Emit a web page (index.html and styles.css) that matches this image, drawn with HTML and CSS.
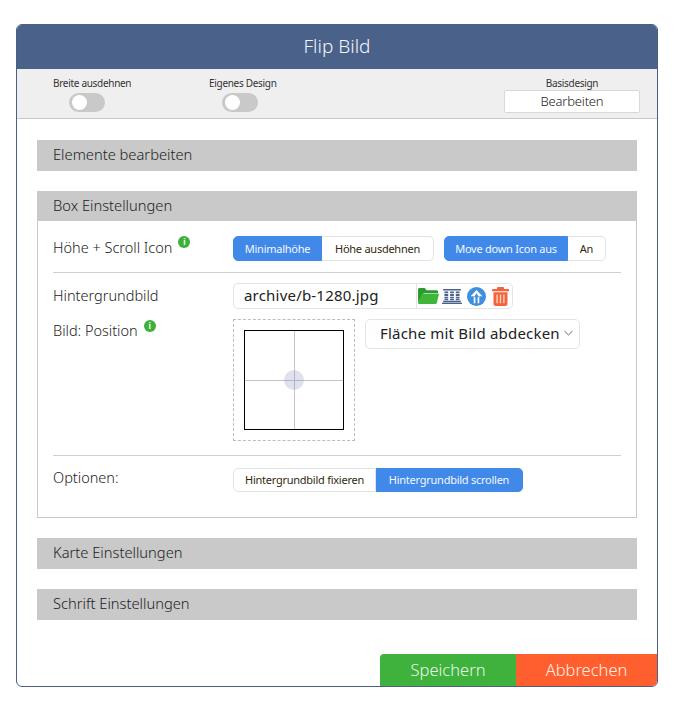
FILE: index.html
```html
<!DOCTYPE html>
<html lang="de">
<head>
<meta charset="utf-8">
<title>Flip Bild</title>
<link rel="stylesheet" href="styles.css">
</head>
<body>
<div class="modal">
  <header class="modal-head">Flip Bild</header>
  <div class="subbar">
    <div class="sub-col sub-col-a">
      <span class="sub-label">Breite ausdehnen</span>
      <span class="toggle toggle-a"><span class="knob"></span></span>
    </div>
    <div class="sub-col sub-col-b">
      <span class="sub-label">Eigenes Design</span>
      <span class="toggle toggle-b"><span class="knob"></span></span>
    </div>
    <div class="sub-col sub-col-c">
      <span class="sub-label sub-label-c">Basisdesign</span>
      <button class="edit-btn">Bearbeiten</button>
    </div>
  </div>
  <main class="modal-body">
    <h2 class="section-title">Elemente bearbeiten</h2>
    <section class="section">
      <h2 class="section-title">Box Einstellungen</h2>
      <div class="box">
        <div class="row row-first">
          <div class="label">Höhe + Scroll Icon<span class="info">i</span></div>
          <div class="controls">
            <div class="seg">
              <span class="seg-btn on w-min">Minimalhöhe</span>
              <span class="seg-btn w-ext">Höhe ausdehnen</span>
            </div>
            <div class="seg">
              <span class="seg-btn on w-move">Move down Icon aus</span>
              <span class="seg-btn w-an">An</span>
            </div>
          </div>
        </div>
        <div class="row row-file">
          <div class="label">Hintergrundbild</div>
          <div class="file">
            <span class="file-name">archive/b-1280.jpg</span>
            <span class="file-icons">
              <svg class="ico ico-folder" viewBox="0 0 22 15" preserveAspectRatio="none"><path fill="#2a9c2e" d="M0 14V1.500C0 .7.600 0 1.400 0h5.600l2 2h10.600c.8 0 1.400.6 1.400 1.400V5H6.500c-.7 0-1.200.4-1.500 1z"/><path fill="#3fb53a" d="M0 15l3.400-8.700c.3-.5.700-.8 1.300-.8H22l-2.300 8.500c-.3.600-.7 1-1.400 1z"/></svg>
              <svg class="ico ico-lib" viewBox="0 0 18 18" preserveAspectRatio="none"><path fill="#4a6189" d="M1 1h16v1.800H1zM1 14.400h16V16H1zM0 16.600h18V18H0z"/><path fill="#4a6189" d="M2.200 3.800h3.400v2.200H2.200zM2.200 6.800h3.400V9H2.200zM2.200 9.800h3.400v2H2.200zM2.200 12.400h3.400v1.400H2.200zM7.300 3.800h3.400v2.200H7.300zM7.300 6.800h3.400V9H7.300zM7.300 9.800h3.400v2H7.300zM7.300 12.400h3.400v1.400H7.300zM12.400 3.800h3.400v2.200h-3.400zM12.400 6.800h3.400V9h-3.400zM12.400 9.800h3.400v2h-3.400zM12.400 12.400h3.400v1.400h-3.400z"/></svg>
              <svg class="ico ico-up" viewBox="0 0 20 20"><circle cx="10" cy="10" r="10" fill="#3f8fdf"/><path fill="#fff" d="M10 3.200L16.200 9.800h-3.300V17h-1.700v-6.300h1.500L10 6.700 7.300 10.700h1.500V17H7.100V9.800H3.800z"/></svg>
              <svg class="ico ico-trash" viewBox="0 0 17 20" preserveAspectRatio="none"><path fill="#f4633a" d="M6 0h5c.6 0 1 .4 1 1v1h4c.6 0 1 .4 1 1v1.500H0V3c0-.6.4-1 1-1h4V1c0-.6.4-1 1-1z"/><path fill="#f4633a" d="M1.500 5.500h14V18c0 1.100-.9 2-2 2h-10c-1.100 0-2-.9-2-2z"/><path fill="#fbd3c4" d="M4.400 8h1.400v9H4.400zM7.800 8h1.400v9H7.800zM11.200 8h1.400v9h-1.400z"/></svg>
            </span>
          </div>
        </div>
        <div class="row row-pos">
          <div class="label">Bild: Position<span class="info">i</span></div>
          <div class="pos-controls">
            <div class="picker">
              <div class="picker-frame">
                <span class="cross-v"></span>
                <span class="cross-h"></span>
                <span class="dot"></span>
              </div>
            </div>
            <div class="select">Fläche mit Bild abdecken<svg class="chev" viewBox="0 0 8 5"><path d="M.5.800L4 4.200 7.500.800" fill="none" stroke="#555" stroke-width=".8"/></svg></div>
          </div>
        </div>
        <div class="row row-last">
          <div class="label">Optionen:</div>
          <div class="seg">
            <span class="seg-btn w-fix">Hintergrundbild fixieren</span>
            <span class="seg-btn on w-scroll">Hintergrundbild scrollen</span>
          </div>
        </div>
      </div>
    </section>
    <h2 class="section-title">Karte Einstellungen</h2>
    <h2 class="section-title">Schrift Einstellungen</h2>
  </main>
  <footer class="modal-foot">
    <button class="foot-btn save">Speichern</button>
    <button class="foot-btn cancel">Abbrechen</button>
  </footer>
</div>
</body>
</html>
```
FILE: styles.css
```css
* { box-sizing: border-box; }
html, body { margin: 0; padding: 0; background: #fff; }
body {
  padding: 24px 18px 0 16px;
  font-family: "Noto Sans", "Open Sans", sans-serif;
  font-weight: 300;
  color: #222;
}
.modal {
  width: 642px;
  height: 663px;
  border: 1px solid #4d5f80;
  border-radius: 6px;
  display: flex;
  flex-direction: column;
  background: #fff;
  overflow: hidden;
}
.modal-head {
  height: 45px;
  margin-top: -1px;
  background: #4a6189;
  color: #f2f5f9;
  font-size: 19px;
  line-height: 45px;
  text-align: center;
  flex: none;
}
.subbar {
  height: 50px;
  flex: none;
  background: #efefef;
  border-bottom: 1px solid #c8c8c8;
  display: flex;
  padding: 7px 17px 0 36px;
}
.sub-col { display: flex; flex-direction: column; }
.sub-col-a { width: 156px; }
.sub-col-b { width: 295px; }
.sub-col-c { width: 136px; align-items: center; }
.sub-label { font-size: 10px; line-height: 15px; height: 15px; letter-spacing: -.3px; white-space: nowrap; color: #333; font-weight: 400; }
.toggle {
  width: 36px;
  height: 19px;
  border-radius: 10px;
  background: #c9c9c9;
  margin-top: 2px;
  padding: 2px;
  display: flex;
}
.toggle-a { margin-left: 16px; }
.toggle-b { margin-left: 13px; }
.knob { width: 15px; height: 15px; border-radius: 50%; background: #fff; margin-left: 1px; }
.edit-btn {
  width: 136px;
  height: 23px;
  margin-top: -1px;
  border: 1px solid #d8d8d8;
  border-radius: 2px;
  background: #fff;
  font: 300 13px/21px "Noto Sans", sans-serif;
  letter-spacing: -.2px;
  color: #222;
  padding: 0;
}
.modal-body {
  flex: 1;
  display: flex;
  flex-direction: column;
  gap: 20px;
  padding: 21px 20px 0;
}
.section-title {
  margin: 0;
  height: 31px;
  flex: none;
  background: #c9c9c9;
  font-size: 14.700px;
  font-weight: 300;
  line-height: 29px;
  padding-left: 16px;
  color: #222;
}
.section { display: flex; flex-direction: column; }
.section .section-title { height: 30px; line-height: 28px; }
.box {
  height: 297px;
  border: 1px solid #c9c9c9;
  border-top: 0;
  padding: 0 15px;
}
.row { display: flex; }
.label {
  width: 180px;
  flex: none;
  font-size: 14.500px;
  line-height: 20px;
  color: #222;
  white-space: nowrap;
}
.info {
  display: inline-block;
  width: 12px;
  height: 12px;
  border-radius: 50%;
  background: #3eb03a;
  color: #fff;
  font-size: 8px;
  font-weight: 700;
  line-height: 12px;
  text-align: center;
  margin-left: 6px;
  vertical-align: 7px;
}
.row-first {
  padding: 15px 0 11px;
  border-bottom: 1px solid #d0d0d0;
  align-items: center;
}
.row-first .label { padding-bottom: 4px; }
.row-first .info { vertical-align: 8px; }
.controls { display: flex; gap: 10px; }
.seg { display: flex; height: 25px; }
.row-last .seg { height: 24px; }
.seg-btn {
  border: 1px solid #e2e2e2;
  border-left-width: 0;
  font-size: 11px;
  font-weight: 400;
  letter-spacing: -.25px;
  line-height: 23px;
  text-align: center;
  color: #33290f;
  background: #fff;
  white-space: nowrap;
}
.row-last .seg-btn { line-height: 21px; }
.seg-btn:first-child { border-left-width: 1px; border-radius: 5px 0 0 5px; }
.seg-btn:last-child { border-radius: 0 5px 5px 0; }
.seg-btn.on { background: #4189e8; border-color: #4189e8; color: #f3f7fd; }
.w-min { width: 89px; }
.w-ext { width: 112px; }
.w-move { width: 124px; }
.w-an { width: 38px; }
.w-fix { width: 143px; }
.w-scroll { width: 147px; }
.row-file { margin-top: 10px; height: 26px; align-items: center; }
.row-file .label { padding-bottom: 2px; }
.file {
  display: flex;
  width: 280px;
  height: 26px;
  border: 1px solid #e4e4e4;
  border-radius: 5px;
}
.file-name {
  width: 183px;
  border-right: 1px solid #e4e4e4;
  padding-left: 10px;
  font-size: 15px;
  font-weight: 450;
  letter-spacing: .2px;
  line-height: 23px;
  color: #222;
  white-space: nowrap;
}
.file-icons { display: flex; align-items: center; padding-left: 1px; }
.ico { display: block; flex: none; }
.ico-folder { width: 21px; height: 16px; }
.ico-lib { width: 20px; height: 16px; margin-left: 3px; }
.ico-up { width: 19px; height: 19px; margin-left: 5px; }
.ico-trash { width: 17px; height: 19px; margin-left: 6px; }
.row-pos { margin-top: 10px; padding-bottom: 14px; border-bottom: 1px solid #d0d0d0; }
.row-pos .label { padding-top: 1px; }
.pos-controls { display: flex; gap: 10px; align-items: flex-start; }
.picker {
  width: 122px;
  height: 122px;
  border: 1px dashed #bdbdbd;
  padding: 10px;
}
.picker-frame {
  width: 100px;
  height: 100px;
  border: 1px solid #000;
  position: relative;
}
.cross-v { position: absolute; left: 49px; top: 0; bottom: 0; width: 1px; background: #c3c3cb; }
.cross-h { position: absolute; top: 49px; left: 0; right: 0; height: 1px; background: #c3c3cb; }
.dot {
  position: absolute;
  left: 39px;
  top: 39px;
  width: 20px;
  height: 20px;
  border-radius: 50%;
  background: #7f8ab5;
  opacity: .25;
}
.select {
  width: 215px;
  height: 30px;
  border: 1px solid #e4e4e4;
  border-radius: 5px;
  padding: 0 0 2px 14px;
  font-size: 15px;
  font-weight: 450;
  letter-spacing: .2px;
  color: #222;
  white-space: nowrap;
  display: flex;
  align-items: center;
}
.chev { width: 9px; height: 6px; margin-left: 4px; flex: none; }
.row-last { padding-top: 11px; align-items: center; }
.row-last .label { padding-bottom: 6px; }
.modal-foot {
  flex: none;
  display: flex;
  justify-content: flex-end;
  height: 32px;
}
.foot-btn {
  border: 0;
  padding: 0;
  height: 32px;
  color: #eaf7e8;
  font: 300 16.500px/32px "Noto Sans", sans-serif;
}
.save { width: 136px; background: #3eb23c; border-top-left-radius: 4px; }
.cancel { width: 141px; background: #ff5f2e; color: #fbeee8; }
```
